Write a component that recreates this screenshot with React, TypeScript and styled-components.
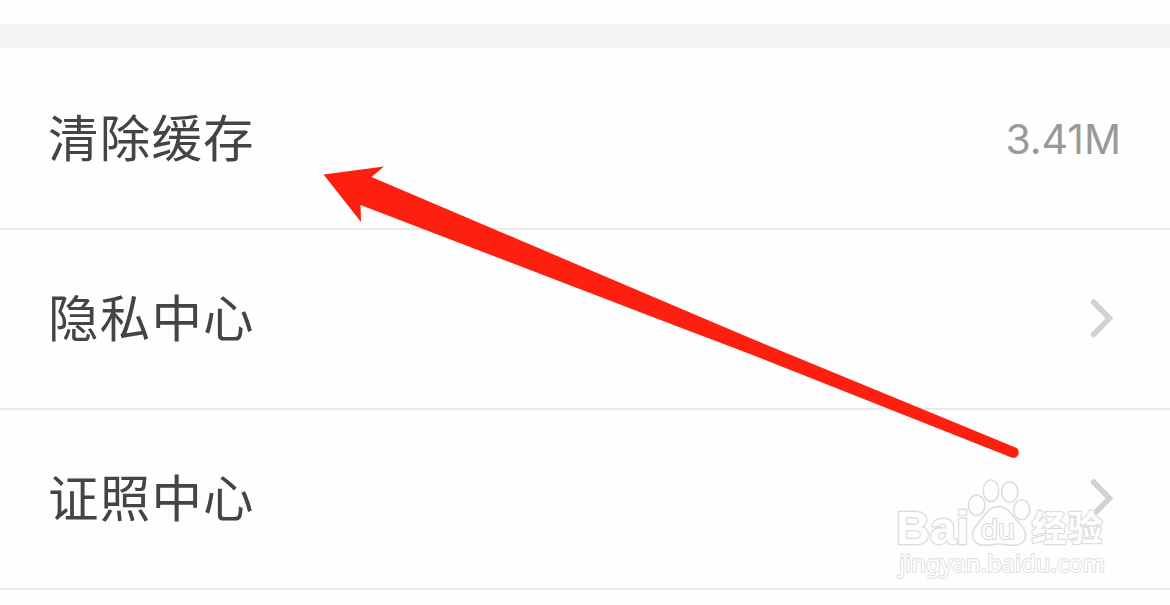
import React from 'react';
import styled, { createGlobalStyle } from 'styled-components';

const rows = [
    { label: '清除缓存', value: '3.41M' },
    { label: '隐私中心' },
    { label: '证照中心' },
];

const Chevron = () => (
    <ChevronIcon viewBox="0 0 28 44">
        <path d="M5.5 5 L21.5 21.2 L5.5 37.5" />
    </ChevronIcon>
);

const Watermark = () => (
    <WatermarkArt viewBox="890 470 225 115">
        <text className="brand" x="896" y="543.5" fontSize="47" textLength="73" lengthAdjust="spacingAndGlyphs">Bai</text>
        <ellipse cx="976.7" cy="505.3" rx="8.2" ry="10.2" />
        <ellipse cx="991" cy="490.8" rx="7.8" ry="10.8" />
        <ellipse cx="1009.7" cy="492" rx="8.2" ry="10.2" />
        <ellipse cx="1021.7" cy="509.8" rx="8" ry="10" />
        <path d="M998.5 506.5 C1006 506.5 1010 512 1015 518.5 C1020 524.5 1025.5 528 1025.5 535 C1025.5 542 1020 545.5 1013 545.3 C1007 545 1003 544 998.5 544 C994 544 990 545.3 984.5 545.3 C977 545.3 972.5 541 972.5 534.5 C972.5 528 977 525 981.5 519 C987 511.5 991 506.5 998.5 506.5 Z" />
        <text className="du" x="981" y="538.5" fontSize="28" textLength="34" lengthAdjust="spacingAndGlyphs">du</text>
        <text className="cjk" x="1031.5" y="540.5" fontSize="35" textLength="71">经验</text>
        <text className="url" x="899" y="572" fontSize="24" textLength="206" lengthAdjust="spacingAndGlyphs">jingyan.baidu.com</text>
    </WatermarkArt>
);

const App = () => {
    return (
        <Page>
            <GlobalStyle />
            <Divider />
            {rows.map((row) => (
                <Row key={row.label}>
                    <Label>{row.label}</Label>
                    {row.value ? <Value>{row.value}</Value> : <Chevron />}
                </Row>
            ))}
            <Arrow viewBox="0 0 1170 605">
                <path d="M323.5 174.5 L384 166.5 L371.5 177 L650 295.5 L750 338 L1015.5 447.6 A5.2 5.2 0 0 1 1011.5 457.4 L750 354 L650 316 L360.5 205 L361 222 Z" />
            </Arrow>
            <Watermark />
        </Page>
    );
}

const GlobalStyle = createGlobalStyle`
    body {
        margin: 0;
        background: #fefefe;
    }
`

const Page = styled.div`
    position: relative;
    box-sizing: border-box;
    width: 1170px;
    height: 605px;
    padding-top: 24px;
    overflow: hidden;
    background: #fefefe;
    font-family: Inter, "Noto Sans CJK SC", sans-serif;
`

const Divider = styled.div`
    height: 24px;
    margin-bottom: 2px;
    background: #f5f5f5;
`

const Row = styled.div`
    display: flex;
    align-items: center;
    justify-content: space-between;
    box-sizing: border-box;
    height: 180px;
    padding: 0 48px;
    border-bottom: 2px solid #e9e9e9;
`

const Label = styled.div`
    padding-bottom: 8px;
    font-family: "Noto Sans CJK SC", sans-serif;
    font-size: 50.5px;
    line-height: 72px;
    letter-spacing: 1.2px;
    color: #444;
`

const Value = styled.div`
    margin-right: 1px;
    padding-bottom: 1px;
    font-size: 41px;
    line-height: 50px;
    color: #999;
`

const ChevronIcon = styled.svg`
    width: 28px;
    height: 44px;
    margin-right: 6px;

    path {
        fill: none;
        stroke: #d2d2d2;
        stroke-width: 5.5;
        stroke-linecap: round;
    }
`

/* Drawn over the list */
const Arrow = styled.svg`
    position: absolute;
    top: 0;
    left: 0;
    width: 1170px;
    height: 605px;
    fill: #fd2010;
`

const WatermarkArt = styled.svg`
    position: absolute;
    top: 470px;
    left: 890px;
    width: 225px;
    height: 115px;

    text, path, ellipse {
        fill: #fefefe;
        stroke: #dedede;
        stroke-width: 1.6;
        stroke-linejoin: round;
    }
    text {
        paint-order: stroke;
    }
    .brand {
        font-family: "Liberation Sans", sans-serif;
        font-weight: bold;
        stroke-width: 2.8;
    }
    .du {
        font-family: "Liberation Sans", sans-serif;
        stroke: #d6d6d6;
        stroke-width: 1.8;
    }
    .cjk {
        font-family: "Noto Sans CJK SC", sans-serif;
        font-weight: bold;
        stroke-width: 2.6;
    }
    .url {
        font-family: "Noto Sans", sans-serif;
        stroke: #dfdfdf;
        stroke-width: 2;
    }
`

export default App;
